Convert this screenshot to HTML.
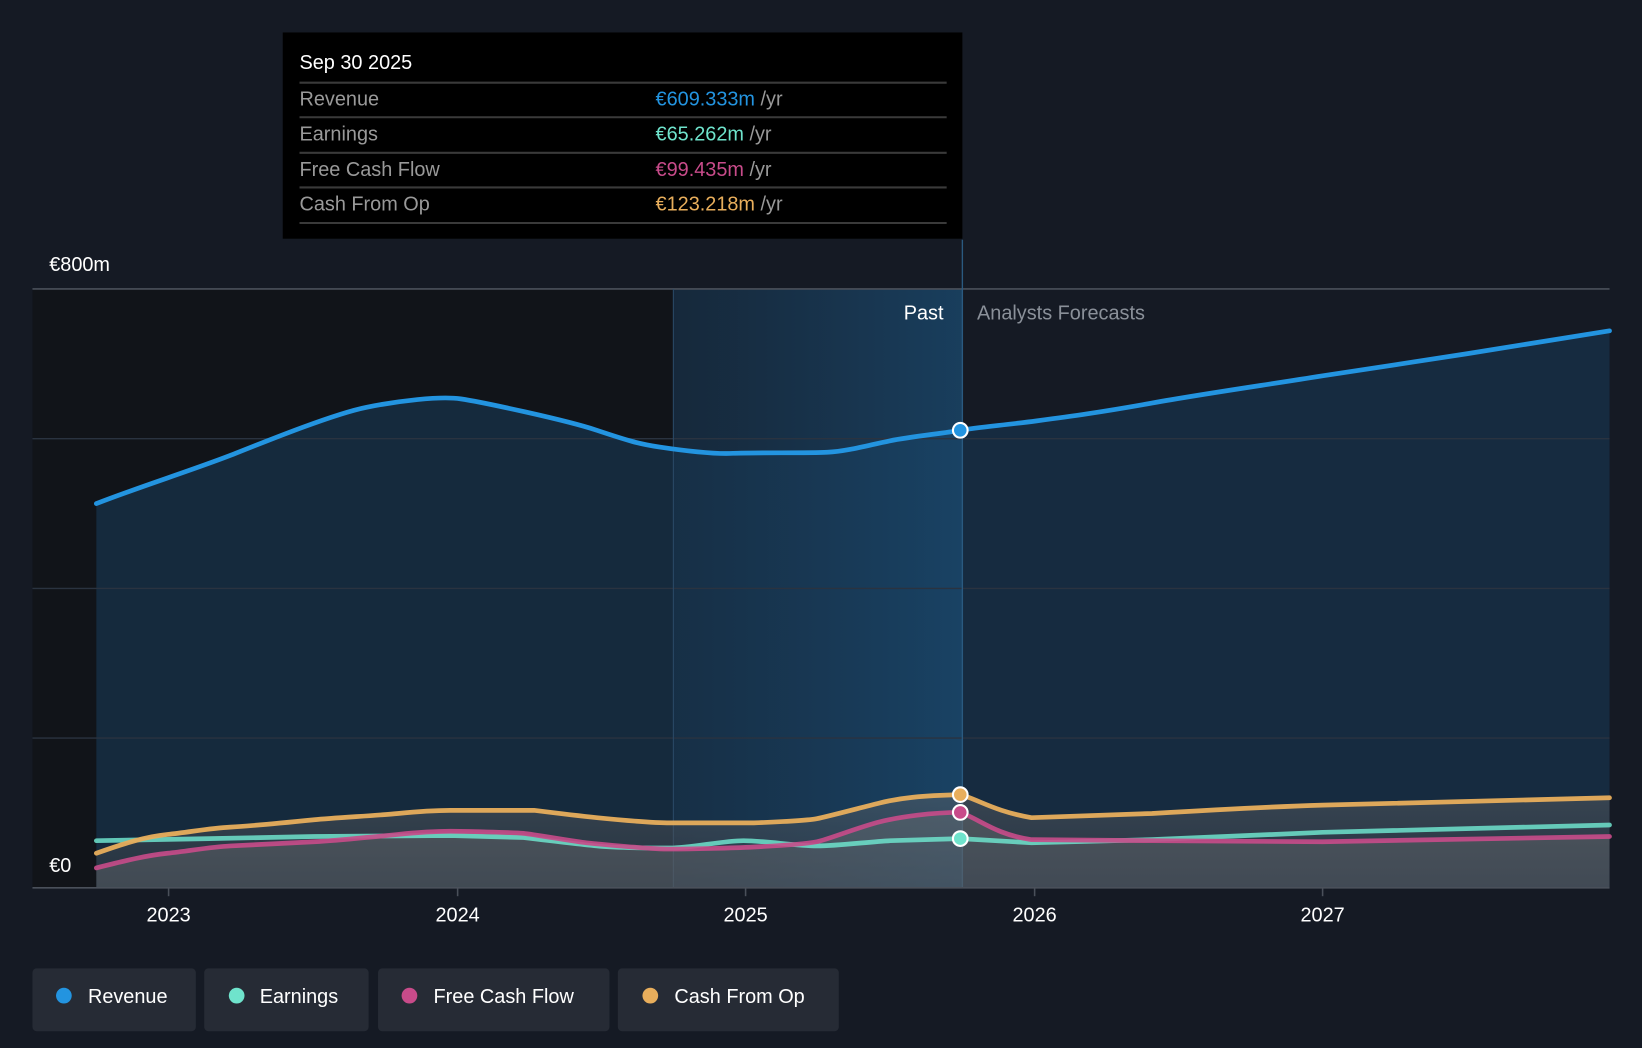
<!DOCTYPE html>
<html><head><meta charset="utf-8"><style>
html,body{margin:0;padding:0;background:#151a24;}
svg{display:block;font-family:"Liberation Sans",Arial,sans-serif;}
</style></head><body>
<svg width="1642" height="1048" viewBox="0 0 1568 1001" preserveAspectRatio="none">
<defs>
<linearGradient id="hl" x1="0" x2="1" y1="0" y2="0"><stop offset="0" stop-color="#17324a" stop-opacity="0.6"/><stop offset="1" stop-color="#1a4a70" stop-opacity="0.75"/></linearGradient>
<linearGradient id="gr" x1="0" x2="0" y1="0" y2="1"><stop offset="0" stop-color="#6a6a6a" stop-opacity="0.75"/><stop offset="1" stop-color="#3a3d44" stop-opacity="0.7"/></linearGradient>
</defs>
<rect width="1568" height="1001" fill="#151a24"/>
<rect x="31" y="276" width="612" height="572" fill="#111419"/>
<!-- revenue area -->
<path d="M92,481 C130,466 190,447 225,433 S320,395 350,389 S420,378 440,381 S540,401 570,411 S610,424 630,427 S680,434 700,433 S770,433 790,432 S830,425 850,421 S900,414 917,411 S960,406 990,402 S1050,394 1100,385 S1200,369 1263,359 S1350,346 1400,338 S1500,322 1537,316 L1537,848 L92,848 Z" fill="#17324a" fill-opacity="0.75"/>
<rect x="643" y="276" width="276" height="572" fill="url(#hl)"/>
<g stroke="#2a3340" stroke-width="1.3">
<line x1="31" y1="419" x2="1537" y2="419"/><line x1="31" y1="562" x2="1537" y2="562"/><line x1="31" y1="705" x2="1537" y2="705"/>
</g>
<line x1="31" y1="276" x2="1537" y2="276" stroke="#4a505a" stroke-width="1.5"/>
<line x1="643" y1="276" x2="643" y2="848" stroke="#2a4a66" stroke-width="1"/>
<line x1="919" y1="229" x2="919" y2="848" stroke="#2a5a80" stroke-width="1.3"/>
<!-- grey area under cash from op -->
<path d="M92,815 C120,805 140,799 160,797 S200,791 220,790 S280,785 300,783 S360,779 380,777 S420,774 430,774 L510,774 S550,779 570,781 S620,786 640,786 L720,786 S770,784 780,782 S820,772 840,767 S880,760 917,759 C935,764 950,775 985,781 L1100,777 S1200,771 1263,769 L1537,762 L1537,848 L92,848 Z" fill="url(#gr)" fill-opacity="0.55"/>
<path d="M92,829 C120,822 140,817 160,815 S200,809 220,808 S280,805 300,804 S360,799 380,797 S420,794 430,794 S490,795 500,796 S550,804 560,805 S620,811 640,811 S700,810 720,809 S770,806 780,804 S820,790 840,785 S890,776 917,776 C935,782 950,797 985,802 L1100,803 L1263,804 L1537,799 L1537,848 L92,848 Z" fill="#777" fill-opacity="0.35"/>
<g fill="none" stroke-width="4.5" stroke-linecap="round" stroke-linejoin="round">
<path d="M92,803 L200,801 L300,799 L430,798 L500,800 S550,806 570,808 S620,810 640,810 S690,803 710,803 S760,808 780,808 S830,804 850,803 L917,801 L985,805 L1100,802 L1263,795 L1537,788" stroke="#6fe3cc" stroke-opacity="0.85"/>
<path d="M92,829 C120,822 140,817 160,815 S200,809 220,808 S280,805 300,804 S360,799 380,797 S420,794 430,794 S490,795 500,796 S550,804 560,805 S620,811 640,811 S700,810 720,809 S770,806 780,804 S820,790 840,785 S890,776 917,776 C935,782 950,797 985,802 L1100,803 L1263,804 L1537,799" stroke="#c84b8a" stroke-opacity="0.9"/>
<path d="M92,815 C120,805 140,799 160,797 S200,791 220,790 S280,785 300,783 S360,779 380,777 S420,774 430,774 L510,774 S550,779 570,781 S620,786 640,786 L720,786 S770,784 780,782 S820,772 840,767 S880,760 917,759 C935,764 950,775 985,781 L1100,777 S1200,771 1263,769 L1537,762" stroke="#e8ae5c" stroke-opacity="0.95"/>
<path d="M92,481 C130,466 190,447 225,433 S320,395 350,389 S420,378 440,381 S540,401 570,411 S610,424 630,427 S680,434 700,433 S770,433 790,432 S830,425 850,421 S900,414 917,411 S960,406 990,402 S1050,394 1100,385 S1200,369 1263,359 S1350,346 1400,338 S1500,322 1537,316" stroke="#2394e0"/>
</g>
<g stroke="#fff" stroke-width="2">
<circle cx="917" cy="411" r="7" fill="#2394e0"/>
<circle cx="917" cy="759" r="7" fill="#e8ae5c"/>
<circle cx="917" cy="776" r="7" fill="#c84b8a"/>
<circle cx="917" cy="801" r="7" fill="#6fe3cc"/>
</g>
<line x1="31" y1="848" x2="1537" y2="848" stroke="#4a505a" stroke-width="1.5"/>
<g stroke="#4a505a" stroke-width="1.5"><line x1="161" y1="848" x2="161" y2="856"/><line x1="437" y1="848" x2="437" y2="856"/><line x1="712" y1="848" x2="712" y2="856"/><line x1="988" y1="848" x2="988" y2="856"/><line x1="1263" y1="848" x2="1263" y2="856"/></g>
<g font-size="19" fill="#fff" text-anchor="middle">
<text x="161" y="880">2023</text><text x="437" y="880">2024</text><text x="712" y="880">2025</text><text x="988" y="880">2026</text><text x="1263" y="880">2027</text>
</g>
<text x="47" y="259" font-size="19" fill="#fff">€800m</text>
<text x="47" y="833" font-size="19" fill="#fff">€0</text>
<text x="901" y="305" font-size="19" fill="#fff" text-anchor="end">Past</text>
<text x="933" y="305" font-size="19" fill="#8a9099">Analysts Forecasts</text>
<!-- tooltip -->
<rect x="270" y="31" width="649" height="197" fill="#000"/>
<text x="286" y="66" font-size="19" fill="#fff">Sep 30 2025</text>
<g stroke="#3a3a3a" stroke-width="2"><line x1="286" y1="79" x2="904" y2="79"/><line x1="286" y1="112" x2="904" y2="112"/><line x1="286" y1="146" x2="904" y2="146"/><line x1="286" y1="179" x2="904" y2="179"/><line x1="286" y1="213" x2="904" y2="213"/></g>
<g font-size="19" fill="#999">
<text x="286" y="101">Revenue</text><text x="286" y="134">Earnings</text><text x="286" y="168">Free Cash Flow</text><text x="286" y="201">Cash From Op</text>
</g>
<g font-size="19">
<text x="626" y="101"><tspan fill="#2394e0">€609.333m</tspan><tspan fill="#999"> /yr</tspan></text>
<text x="626" y="134"><tspan fill="#6fe3cc">€65.262m</tspan><tspan fill="#999"> /yr</tspan></text>
<text x="626" y="168"><tspan fill="#c84b8a">€99.435m</tspan><tspan fill="#999"> /yr</tspan></text>
<text x="626" y="201"><tspan fill="#e8ae5c">€123.218m</tspan><tspan fill="#999"> /yr</tspan></text>
</g>
<!-- legend -->
<g fill="#262b35">
<rect x="31" y="925" width="156" height="60" rx="4"/><rect x="195" y="925" width="157" height="60" rx="4"/><rect x="361" y="925" width="221" height="60" rx="4"/><rect x="590" y="925" width="211" height="60" rx="4"/>
</g>
<circle cx="61" cy="951" r="7.5" fill="#2394e0"/><circle cx="226" cy="951" r="7.5" fill="#6fe3cc"/><circle cx="391" cy="951" r="7.5" fill="#c84b8a"/><circle cx="621" cy="951" r="7.5" fill="#e8ae5c"/>
<g font-size="19" fill="#fff">
<text x="84" y="958">Revenue</text><text x="248" y="958">Earnings</text><text x="414" y="958">Free Cash Flow</text><text x="644" y="958">Cash From Op</text>
</g>
</svg>
</body></html>
